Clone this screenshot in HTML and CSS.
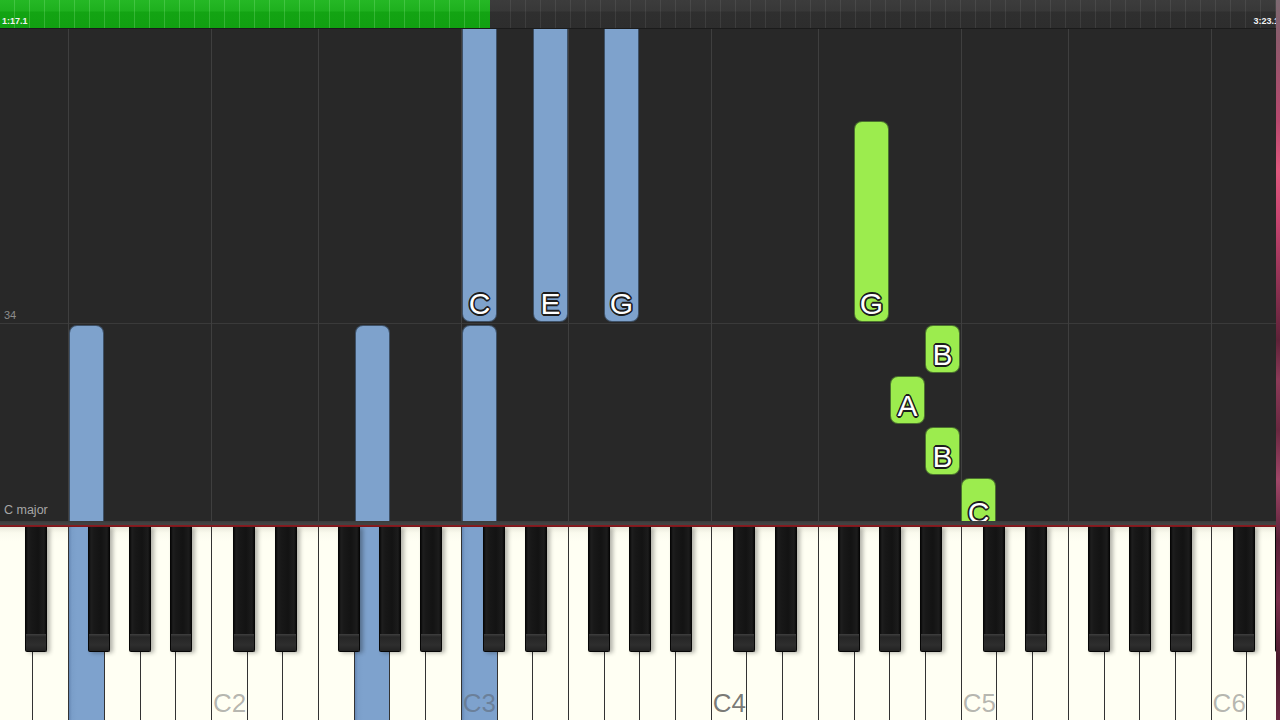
FILE: index.html
```html
<!DOCTYPE html>
<html lang="en">
<head>
<meta charset="utf-8">
<title>Piano roll</title>
<link rel="stylesheet" href="styles.css">
</head>
<body>
<div class="screen">
  <div class="app">
    <div class="topbar">
      <div class="progress"><span class="time">1:17.1</span></div>
      <div class="remaining"><span class="time end">3:23.1</span></div>
    </div>
    <div class="falls">
      <span class="measure">34</span>
      <span class="keysig">C major</span>
      <div class="note blue" style="left:69px;top:296px;height:300px"></div>
      <div class="note blue" style="left:355px;top:296px;height:300px"></div>
      <div class="note blue" style="left:462px;top:296px;height:300px"></div>
      <div class="note blue" style="left:462px;top:-20px;height:313px"><span class="name">C</span></div>
      <div class="note blue" style="left:533px;top:-20px;height:313px"><span class="name">E</span></div>
      <div class="note blue" style="left:604px;top:-20px;height:313px"><span class="name">G</span></div>
      <div class="note green" style="left:854px;top:92px;height:201px"><span class="name">G</span></div>
      <div class="note green" style="left:925px;top:296px;height:48px"><span class="name">B</span></div>
      <div class="note green" style="left:890px;top:347px;height:48px"><span class="name">A</span></div>
      <div class="note green" style="left:925px;top:398px;height:48px"><span class="name">B</span></div>
      <div class="note green" style="left:961px;top:449px;height:100px"><span class="name cut">C</span></div>
    </div>
    <div class="shelf"></div>
    <div class="keyboard">
      <div class="keys">
        <div class="wk"><span class="bk d"></span></div>
        <div class="wk"></div>
        <div class="wk lit"><span class="bk f"></span></div>
        <div class="wk"><span class="bk g"></span></div>
        <div class="wk"><span class="bk a"></span></div>
        <div class="wk"></div>

        <div class="wk"><span class="bk c"></span><span class="oct">C2</span></div>
        <div class="wk"><span class="bk d"></span></div>
        <div class="wk"></div>
        <div class="wk"><span class="bk f"></span></div>
        <div class="wk lit"><span class="bk g"></span></div>
        <div class="wk"><span class="bk a"></span></div>
        <div class="wk"></div>

        <div class="wk lit"><span class="bk c"></span><span class="oct">C3</span></div>
        <div class="wk"><span class="bk d"></span></div>
        <div class="wk"></div>
        <div class="wk"><span class="bk f"></span></div>
        <div class="wk"><span class="bk g"></span></div>
        <div class="wk"><span class="bk a"></span></div>
        <div class="wk"></div>

        <div class="wk"><span class="bk c"></span><span class="oct middle">C4</span></div>
        <div class="wk"><span class="bk d"></span></div>
        <div class="wk"></div>
        <div class="wk"><span class="bk f"></span></div>
        <div class="wk"><span class="bk g"></span></div>
        <div class="wk"><span class="bk a"></span></div>
        <div class="wk"></div>

        <div class="wk"><span class="bk c"></span><span class="oct">C5</span></div>
        <div class="wk"><span class="bk d"></span></div>
        <div class="wk"></div>
        <div class="wk"><span class="bk f"></span></div>
        <div class="wk"><span class="bk g"></span></div>
        <div class="wk"><span class="bk a"></span></div>
        <div class="wk"></div>

        <div class="wk"><span class="bk c"></span><span class="oct">C6</span></div>
        <div class="wk"><span class="bk d"></span></div>
      </div>
    </div>
  </div>
  <div class="edge"></div>
</div>
</body>
</html>
```
FILE: styles.css
```css
* { box-sizing: border-box; }

html, body {
  margin: 0;
  padding: 0;
  width: 1280px;
  height: 720px;
  overflow: hidden;
  background: #282828;
  font-family: "Liberation Sans", Arial, sans-serif;
}

.screen {
  display: flex;
  width: 1280px;
  height: 720px;
}

.app {
  width: 1276px;
  height: 720px;
  display: flex;
  flex-direction: column;
  overflow: hidden;
}

.edge {
  width: 4px;
  height: 720px;
  background: linear-gradient(to bottom,
    #7d6a72 0, #8e5a6c 40px, #b8486e 120px, #e0587e 170px, #c84470 220px,
    #8a3050 290px, #5e2238 340px, #8c3a58 380px, #6a2840 430px,
    #a04668 480px, #5a2036 540px, #7a2e4a 600px, #4a1a2c 660px, #6a2a42 720px);
}

/* ---------- top progress bar ---------- */
.topbar {
  height: 29px;
  flex: 0 0 29px;
  display: flex;
  border-bottom: 1px solid #1b1b1b;
}

.progress {
  width: 490px;
  display: flex;
  align-items: flex-end;
  padding: 0 0 2px 2px;
  background:
    repeating-linear-gradient(to right, transparent 0 14px, rgba(190,255,190,0.2) 14px 15px),
    linear-gradient(to bottom, #25b825 0, #1eb01e 11px, #13a413 12px, #11a011 100%);
}

.remaining {
  flex: 1;
  display: flex;
  align-items: flex-end;
  justify-content: flex-end;
  padding-bottom: 2px;
  background:
    repeating-linear-gradient(to right, transparent 0 14px, rgba(255,255,255,0.07) 14px 15px),
    linear-gradient(to bottom, #3c3c3c 0, #383838 11px, #2f2f2f 12px, #2d2d2d 100%);
  background-position: 6px 0, 0 0;
}

.time {
  font-size: 9px;
  line-height: 10px;
  font-weight: bold;
  color: #f2f2f2;
}

.time.end {
  margin-right: -3px;
}

/* ---------- falling notes area ---------- */
.falls {
  position: relative;
  flex: 0 0 492px;
  height: 492px;
  overflow: hidden;
  background:
    linear-gradient(to right, #3f3f3f 1px, transparent 1px) 68px 0 / 250px 100% repeat-x,
    linear-gradient(to right, #3f3f3f 1px, transparent 1px) 211px 0 / 250px 100% repeat-x,
    linear-gradient(#3a3a3a, #3a3a3a) 0 294px / 100% 1px no-repeat,
    #282828;
}

.measure {
  position: absolute;
  left: 4px;
  top: 280px;
  font-size: 11px;
  color: #8c8c8c;
}

.keysig {
  position: absolute;
  left: 4px;
  bottom: 4px;
  font-size: 12.5px;
  color: #a6a6a6;
}

.note {
  position: absolute;
  width: 35px;
  border-radius: 8px;
  border: 1px solid rgba(10, 14, 20, 0.55);
  display: flex;
  align-items: flex-end;
  justify-content: center;
  padding-bottom: 2px;
}

.note.blue { background: #7ea2cc; }
.note.green { background: #9cec4e; }

.name {
  font-size: 30px;
  line-height: 30px;
  color: #ffffff;
  text-shadow:
    1.6px 0 0 #1c1c1c, -1.6px 0 0 #1c1c1c, 0 1.6px 0 #1c1c1c, 0 -1.6px 0 #1c1c1c,
    1.1px 1.1px 0 #1c1c1c, -1.1px -1.1px 0 #1c1c1c, 1.1px -1.1px 0 #1c1c1c, -1.1px 1.1px 0 #1c1c1c;
}

.name.cut {
  margin-bottom: 47px;
}

/* ---------- keyboard ---------- */
.shelf {
  flex: 0 0 6px;
  height: 6px;
  background: linear-gradient(to bottom, #3a3a3a 0, #444 3px, #3e3e3e 4px, #8c1d22 4px, #7a161b 6px);
}

.keyboard {
  flex: 1;
  overflow: hidden;
  position: relative;
}

.keys {
  display: flex;
  height: 100%;
  margin-left: -3.3px;
}

.wk {
  position: relative;
  flex: 0 0 35.714px;
  height: 100%;
  background: linear-gradient(to bottom, #e9e9dc 0, #fbfbee 6px, #fffff3 14px, #fffff3 100%);
  border-left: 1px solid #333;
  display: flex;
  align-items: flex-end;
  padding: 0 0 4px 1px;
}

.wk.lit {
  background: linear-gradient(to right, #6688b4 0, #7a9ec9 3px, #7ea2cd 8px, #7ea2cd 100%);
}

.oct {
  font-size: 26px;
  line-height: 26px;
  color: rgba(80, 80, 80, 0.42);
}

.oct.middle {
  color: rgba(55, 55, 55, 0.68);
}

.bk {
  position: absolute;
  top: 0;
  z-index: 2;
  width: 22px;
  height: 125px;
  border: 1px solid #060606;
  border-top: none;
  border-radius: 0 0 2px 2px;
  background:
    linear-gradient(to bottom, transparent 0, transparent 107px, #404040 107px, #363636 108px, #262626 110px, #2e2e2e 118px, #222 124px),
    linear-gradient(to right, #0a0a0a 0, #1e1e1e 2px, #181818 5px, #131313 60%, #1c1c1c 90%, #0a0a0a 100%);
  box-shadow: 3px 1px 4px rgba(0, 0, 0, 0.3);
}

.bk.c { left: 21px; }
.bk.d { left: 27.3px; }
.bk.f { left: 19px; }
.bk.g { left: 24.5px; }
.bk.a { left: 29.6px; }
```
